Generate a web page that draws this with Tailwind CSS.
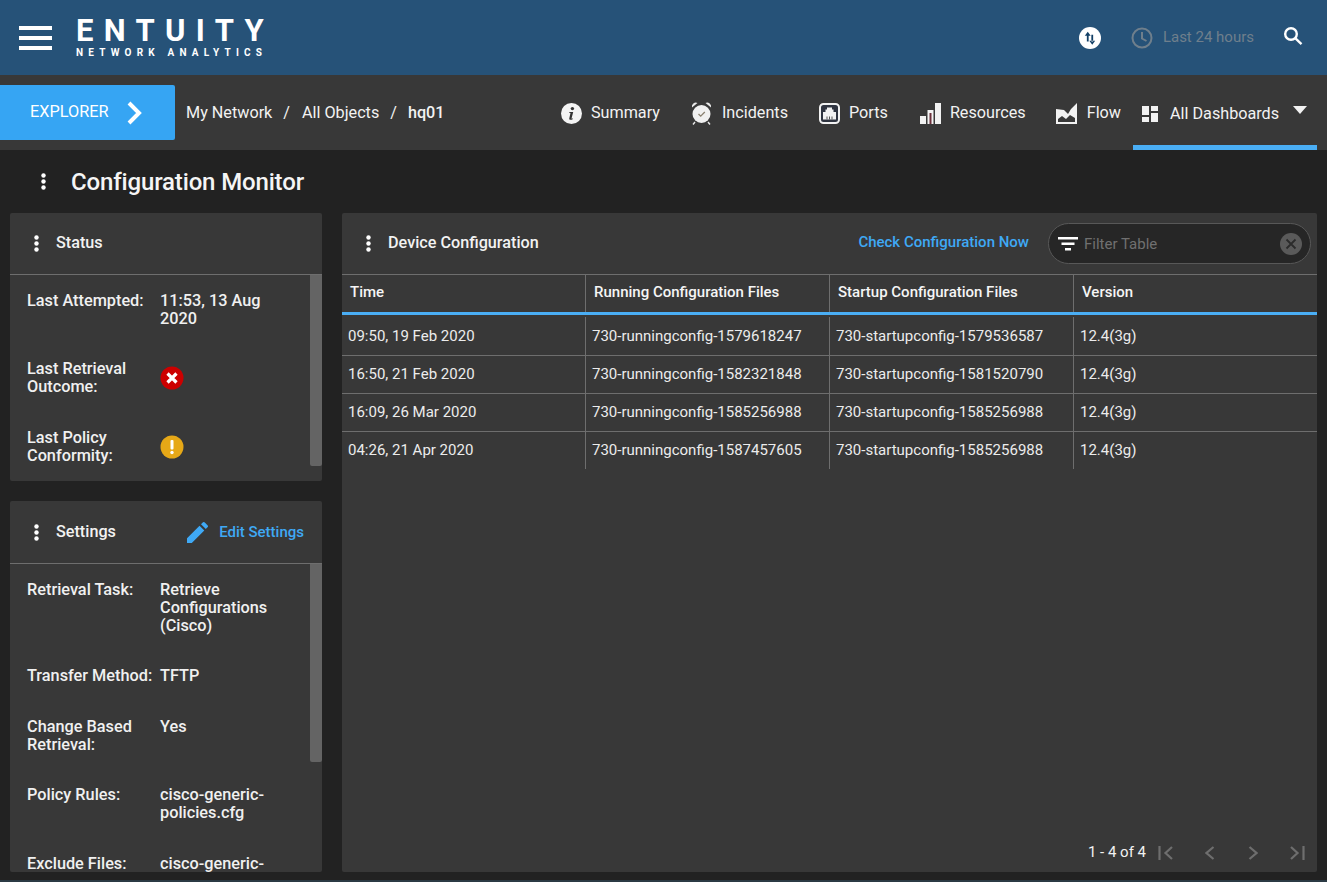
<!DOCTYPE html>
<html lang="en">
<head>
  <meta charset="UTF-8" />
  <title>Entuity Network Analytics</title>
  <script src="https://cdn.jsdelivr.net/npm/@tailwindcss/browser@4"></script>
</head>
<body class="bg-[#222222] text-white font-['Roboto',sans-serif] h-[882px] w-[1327px] overflow-hidden">

  <!-- Top bar -->
  <header class="h-[75px] bg-[#265278] flex items-center">
    <svg class="ml-[19px] w-[33px] h-[24px]" viewBox="0 0 33 24" fill="#fff">
      <rect y="0" width="33" height="4"/><rect y="10" width="33" height="4"/><rect y="20" width="33" height="4"/>
    </svg>
    <div class="ml-[24px] flex flex-col">
      <span class="text-[31px] leading-[26px] font-bold tracking-[10.300px]">ENTUITY</span>
      <span class="text-[10px] leading-[10px] font-bold tracking-[5.200px] mt-[4px]">NETWORK ANALYTICS</span>
    </div>
    <div class="ml-auto flex items-center">
      <div class="w-[22px] h-[22px] rounded-full bg-white flex items-center justify-center">
        <svg class="w-[18px] h-[18px]" viewBox="0 0 16 16" fill="#123f66">
          <path d="M5.200 11V5h1.600v6zM3.400 6l2.600-3.600L8.600 6zM9.200 11V5h1.600v6zM7.400 10.400L10 14l2.600-3.600z"/>
        </svg>
      </div>
      <svg class="ml-[29px] w-[24px] h-[24px]" viewBox="0 0 24 24" fill="none" stroke="#6f7f8c" stroke-width="2">
        <circle cx="12" cy="12" r="9.500"/><path d="M12 6v6.500l4.500 2.500"/>
      </svg>
      <span class="ml-[9px] text-[15px] text-[#6f7f8c]">Last 24 hours</span>
      <svg class="ml-[29px] mr-[24px] mb-[3px] w-[20px] h-[20px]" viewBox="0 0 20 20" fill="none" stroke="#fff" stroke-width="2.400">
        <circle cx="8" cy="8" r="5.800"/><path d="M12.200 12.200l6.300 6"/>
      </svg>
    </div>
  </header>

  <!-- Nav bar -->
  <nav class="h-[75px] bg-[#383838] flex items-start">
    <div class="mt-[10px] w-[175px] h-[55px] bg-[#36a5f3] rounded-r-[2px] flex items-center pl-[30px]">
      <span class="text-[16.300px]">EXPLORER</span>
      <svg class="ml-[17px] w-[17px] h-[24px]" viewBox="0 0 17 24" fill="none" stroke="#fff" stroke-width="4">
        <path d="M3 2l10 10-10 10"/>
      </svg>
    </div>
    <div class="ml-[11px] mt-[28px] flex items-center text-[16.200px] leading-[20px] text-[#f2f2f2]">
      <span>My Network</span>
      <span class="ml-[11px]">/</span>
      <span class="ml-[12px]">All Objects</span>
      <span class="ml-[11px]">/</span>
      <span class="ml-[11px] font-medium">hq01</span>
    </div>

    <div class="ml-auto flex items-start h-full">
      <div class="mt-[27px] flex items-center h-[22px] text-[16.200px] text-[#f2f2f2]">
        <svg class="w-[21px] h-[21px]" viewBox="0 0 21 21">
          <circle cx="10.500" cy="10.500" r="10.500" fill="#f4f4f4"/>
          <circle cx="11.400" cy="5.600" r="1.700" fill="#333"/>
          <path d="M8.200 9h4l-1.600 6.200c-.1.500.3.600 1.300.1l-.2.900c-2 1-3.800.8-3.400-.9L9.500 10l-1.300-.2z" fill="#333"/>
        </svg>
        <span class="ml-[9px]">Summary</span>
        <svg class="ml-[31px] w-[21px] h-[24px]" viewBox="0 0 21 24">
          <circle cx="10.500" cy="13" r="9" fill="#f0f0f0"/>
          <path d="M1 6.500a4 4 0 0 1 5.500-4.600zM20 6.500a4 4 0 0 0-5.500-4.600z" fill="#e8e8e8"/>
          <path d="M4 21l-2 2.500M17 21l2 2.500" stroke="#e8e8e8" stroke-width="1.400"/>
          <path d="M7.500 13l2.200 2.200L13.800 11" fill="none" stroke="#8a8070" stroke-width="1.300"/>
        </svg>
        <span class="ml-[10px]">Incidents</span>
        <svg class="ml-[31px] w-[21px] h-[21px]" viewBox="0 0 21 21">
          <rect x="1" y="1" width="19" height="19" rx="3.500" fill="#2f3440" stroke="#f2f2f2" stroke-width="2"/>
          <path d="M4 16.500V9h2.500V6.500h1.500V4.500h5v2h1.500V9H17v7.500z" fill="#f2f2f2"/>
          <path d="M8 16.500v-3M10.500 16.500v-3M13 16.500v-3" stroke="#555" stroke-width="1"/>
        </svg>
        <span class="ml-[9px]">Ports</span>
        <svg class="ml-[32px] w-[21px] h-[21px]" viewBox="0 0 21 21">
          <rect x="0" y="13" width="6" height="8" fill="#f2f2f2"/>
          <rect x="7.500" y="7" width="6" height="14" fill="#f2f2f2"/>
          <rect x="9.500" y="10" width="2" height="11" fill="#6b2f3a"/>
          <rect x="15" y="0" width="6" height="21" fill="#f2f2f2"/>
        </svg>
        <span class="ml-[9px]">Resources</span>
        <svg class="ml-[30px] w-[21px] h-[21px]" viewBox="0 0 21 21">
          <path d="M0 6v15h21V0l-6 6-3 5-4-4z" fill="#f2f2f2"/>
          <path d="M2 19v-3l4-3 4 3 4-4 5 3v4z" fill="#383838"/>
        </svg>
        <span class="ml-[10px]">Flow</span>
      </div>
      <div class="ml-[12px] w-[184px] h-full border-b-[5px] border-[#4aaef5] flex items-start pl-[9px] pt-[28px] mr-[10px]">
        <svg class="w-[16px] h-[16px] mt-[3px]" viewBox="0 0 16 16" fill="#f2f2f2">
          <rect x="0" y="0" width="7" height="9"/><rect x="9" y="0" width="7" height="5"/>
          <rect x="9" y="7" width="7" height="9"/><rect x="0" y="11" width="7" height="5"/>
        </svg>
        <span class="ml-[12px] text-[16.200px] leading-[22px] text-[#f2f2f2]">All Dashboards</span>
        <svg class="ml-[14px] mt-[3px] w-[14px] h-[8px]" viewBox="0 0 14 8" fill="#f2f2f2"><path d="M0 0h14L7 8z"/></svg>
      </div>
    </div>
  </nav>

  <!-- Page title -->
  <div class="h-[63px] flex items-center pl-[41px]">
    <svg class="w-[5px] h-[17px] mb-[1px]" viewBox="0 0 5 17" fill="#fff">
      <circle cx="2.500" cy="2.500" r="2.200"/><circle cx="2.500" cy="8.500" r="2.200"/><circle cx="2.500" cy="14.500" r="2.200"/>
    </svg>
    <h1 class="ml-[25px] text-[24px] font-medium tracking-[-0.150px] text-[#f5f5f5]">Configuration Monitor</h1>
  </div>

  <div class="flex items-start pl-[10px]">
    <!-- Left column -->
    <div class="w-[312px] flex flex-col gap-[20px]">

      <!-- Status -->
      <section class="h-[268px] bg-[#383838] rounded-[2px] flex flex-col">
        <div class="h-[62px] border-b border-[#6e6e6e] flex items-center pl-[24px] shrink-0">
          <svg class="w-[5px] h-[17px]" viewBox="0 0 5 17" fill="#fff">
            <circle cx="2.500" cy="2.500" r="2.200"/><circle cx="2.500" cy="8.500" r="2.200"/><circle cx="2.500" cy="14.500" r="2.200"/>
          </svg>
          <h2 class="ml-[17px] mb-[1px] text-[16.200px] font-medium text-[#f2f2f2]">Status</h2>
        </div>
        <div class="flex-1 flex relative text-[16.300px] leading-[18px] font-medium text-[#f0f0f0]">
          <div class="pl-[17px] pt-[17px] grid grid-cols-[133px_130px] content-start">
            <span>Last Attempted:</span>
            <span>11:53, 13 Aug 2020</span>
            <span class="mt-[32px]">Last Retrieval Outcome:</span>
            <div class="mt-[32px] h-[36px] flex items-center">
              <svg class="w-[24px] h-[24px]" viewBox="0 0 24 24">
                <circle cx="12" cy="12" r="11.500" fill="#cc0000"/>
                <path d="M7.500 7.500l9 9M16.500 7.500l-9 9" stroke="#fff" stroke-width="3.200"/>
              </svg>
            </div>
            <span class="mt-[33px]">Last Policy Conformity:</span>
            <div class="mt-[33px] h-[36px] flex items-center">
              <svg class="w-[24px] h-[24px]" viewBox="0 0 24 24">
                <circle cx="12" cy="12" r="11.500" fill="#e6a817"/>
                <rect x="10.500" y="5" width="3" height="9.500" rx="1" fill="#fff"/>
                <circle cx="12" cy="17.500" r="1.700" fill="#fff"/>
              </svg>
            </div>
          </div>
          <div class="absolute right-0 top-0 w-[12px] h-[191px] bg-[#646464] rounded-b-[2px]"></div>
        </div>
      </section>

      <!-- Settings -->
      <section class="h-[371px] bg-[#383838] rounded-[2px] flex flex-col overflow-hidden">
        <div class="h-[63px] border-b border-[#6e6e6e] flex items-center pl-[24px] shrink-0">
          <svg class="w-[5px] h-[17px]" viewBox="0 0 5 17" fill="#fff">
            <circle cx="2.500" cy="2.500" r="2.200"/><circle cx="2.500" cy="8.500" r="2.200"/><circle cx="2.500" cy="14.500" r="2.200"/>
          </svg>
          <h2 class="ml-[17px] text-[16.200px] font-medium text-[#f2f2f2]">Settings</h2>
          <svg class="ml-auto w-[21px] h-[21px]" viewBox="0 0 21 21" fill="#3fa9f5">
            <path d="M0 21v-4.800L12.500 3.700l4.800 4.800L4.800 21zM14 2.200l1.700-1.700a1.500 1.500 0 0 1 2.100 0l2.700 2.700a1.500 1.500 0 0 1 0 2.100L18.800 7z"/>
          </svg>
          <span class="ml-[11px] mr-[18px] mt-[1px] text-[15px] font-medium text-[#3fa9f5]">Edit Settings</span>
        </div>
        <div class="flex-1 relative text-[16.300px] leading-[18px] font-medium text-[#f0f0f0] overflow-hidden">
          <div class="pl-[17px] pt-[17px] grid grid-cols-[133px_130px] content-start">
            <span>Retrieval Task:</span>
            <span>Retrieve Configurations (Cisco)</span>
            <span class="mt-[32px]">Transfer Method:</span>
            <span class="mt-[32px]">TFTP</span>
            <span class="mt-[33px]">Change Based Retrieval:</span>
            <span class="mt-[33px]">Yes</span>
            <span class="mt-[32px]">Policy Rules:</span>
            <span class="mt-[32px]">cisco-generic-policies.cfg</span>
            <span class="mt-[33px]">Exclude Files:</span>
            <span class="mt-[33px]">cisco-generic-policies.cfg</span>
          </div>
          <div class="absolute right-0 top-0 w-[12px] h-[198px] bg-[#646464] rounded-b-[2px]"></div>
        </div>
      </section>
    </div>

    <!-- Device configuration -->
    <section class="ml-[20px] w-[975px] h-[659px] bg-[#383838] rounded-[2px] flex flex-col">
      <div class="h-[61px] flex items-center pl-[24px] shrink-0">
        <svg class="w-[5px] h-[17px]" viewBox="0 0 5 17" fill="#fff">
          <circle cx="2.500" cy="2.500" r="2.200"/><circle cx="2.500" cy="8.500" r="2.200"/><circle cx="2.500" cy="14.500" r="2.200"/>
        </svg>
        <h2 class="ml-[17px] mb-[1px] text-[16.200px] font-medium text-[#f2f2f2]">Device Configuration</h2>
        <span class="ml-auto mb-[2px] text-[15px] font-medium text-[#3fa9f5]">Check Configuration Now</span>
        <div class="ml-[19px] mr-[6px] w-[263px] h-[41px] rounded-full bg-[#262626] border border-[#585858] flex items-center pl-[9px]">
          <svg class="w-[20px] h-[14px]" viewBox="0 0 20 14" fill="#fff">
            <rect x="0" y="0" width="20" height="2.500"/><rect x="3.500" y="5.500" width="13" height="2.500"/><rect x="7" y="11" width="6" height="2.500"/>
          </svg>
          <span class="ml-[6px] mt-[1px] text-[15px] text-[#707070]">Filter Table</span>
          <svg class="ml-auto mr-[8px] w-[22px] h-[22px]" viewBox="0 0 22 22">
            <circle cx="11" cy="11" r="11" fill="#5a5a5a"/>
            <path d="M6.500 6.500l9 9M15.500 6.500l-9 9" stroke="#2b2b2b" stroke-width="1.800"/>
          </svg>
        </div>
      </div>

      <!-- Table -->
      <div class="border-t border-[#6e6e6e]">
        <div class="h-[37px] grid grid-cols-[244px_244px_244px_243px] text-[15px] font-medium text-[#f5f5f5] border-b-[3px] border-[#4aaef5] box-content">
          <div class="pl-[8px] pt-[6px] border-r border-[#6e6e6e]">Time</div>
          <div class="pl-[8px] pt-[6px] border-r border-[#6e6e6e]">Running Configuration Files</div>
          <div class="pl-[8px] pt-[6px] border-r border-[#6e6e6e]">Startup Configuration Files</div>
          <div class="pl-[8px] pt-[6px]">Version</div>
        </div>
        <div class="pt-[2px] text-[15px] text-[#ececec]">
          <div class="h-[39px] grid grid-cols-[244px_244px_244px_243px] items-stretch border-b border-[#6e6e6e]">
            <div class="pl-[6px] flex items-center border-r border-[#6e6e6e]">09:50, 19 Feb 2020</div>
            <div class="pl-[6px] flex items-center border-r border-[#6e6e6e]">730-runningconfig-1579618247</div>
            <div class="pl-[6px] flex items-center border-r border-[#6e6e6e]">730-startupconfig-1579536587</div>
            <div class="pl-[6px] flex items-center">12.4(3g)</div>
          </div>
          <div class="h-[38px] grid grid-cols-[244px_244px_244px_243px] items-stretch border-b border-[#6e6e6e]">
            <div class="pl-[6px] flex items-center border-r border-[#6e6e6e]">16:50, 21 Feb 2020</div>
            <div class="pl-[6px] flex items-center border-r border-[#6e6e6e]">730-runningconfig-1582321848</div>
            <div class="pl-[6px] flex items-center border-r border-[#6e6e6e]">730-startupconfig-1581520790</div>
            <div class="pl-[6px] flex items-center">12.4(3g)</div>
          </div>
          <div class="h-[38px] grid grid-cols-[244px_244px_244px_243px] items-stretch border-b border-[#6e6e6e]">
            <div class="pl-[6px] flex items-center border-r border-[#6e6e6e]">16:09, 26 Mar 2020</div>
            <div class="pl-[6px] flex items-center border-r border-[#6e6e6e]">730-runningconfig-1585256988</div>
            <div class="pl-[6px] flex items-center border-r border-[#6e6e6e]">730-startupconfig-1585256988</div>
            <div class="pl-[6px] flex items-center">12.4(3g)</div>
          </div>
          <div class="h-[37px] grid grid-cols-[244px_244px_244px_243px] items-stretch">
            <div class="pl-[6px] pb-[1px] flex items-center border-r border-[#6e6e6e]">04:26, 21 Apr 2020</div>
            <div class="pl-[6px] pb-[1px] flex items-center border-r border-[#6e6e6e]">730-runningconfig-1587457605</div>
            <div class="pl-[6px] pb-[1px] flex items-center border-r border-[#6e6e6e]">730-startupconfig-1585256988</div>
            <div class="pl-[6px] pb-[1px] flex items-center">12.4(3g)</div>
          </div>
        </div>
      </div>

      <!-- Pager -->
      <div class="mt-auto h-[40px] flex items-center justify-end pr-[12px]">
        <span class="text-[15px] text-[#f2f2f2]">1 - 4 of 4</span>
        <svg class="ml-[12px] mt-[2px] w-[15px] h-[14px]" viewBox="0 0 15 14" fill="none" stroke="#6e6e6e" stroke-width="2.200"><path d="M1.500 0v14M14 1L7.500 7l6.500 6"/></svg>
        <svg class="ml-[32px] mt-[2px] w-[10px] h-[14px]" viewBox="0 0 10 14" fill="none" stroke="#6e6e6e" stroke-width="2.200"><path d="M8.500 1l-7 6 7 6"/></svg>
        <svg class="ml-[33px] mt-[2px] w-[10px] h-[14px]" viewBox="0 0 10 14" fill="none" stroke="#6e6e6e" stroke-width="2.200"><path d="M1.500 1l7 6-7 6"/></svg>
        <svg class="ml-[32px] mt-[2px] w-[15px] h-[14px]" viewBox="0 0 15 14" fill="none" stroke="#6e6e6e" stroke-width="2.200"><path d="M13.500 0v14M1 1l6.500 6L1 13"/></svg>
      </div>
    </section>
  </div>

  <!-- Bottom edge of the window -->
  <div class="mt-[8px] h-[2px] bg-[#2b3a44]"></div>
</body>
</html>
